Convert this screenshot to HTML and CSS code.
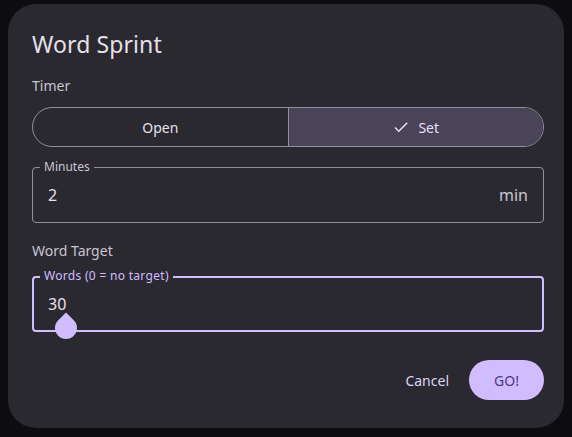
FILE: index.html
```html
<!DOCTYPE html>
<html>
<head>
<meta charset="utf-8">
<link rel="stylesheet" href="styles.css">
</head>
<body>
<div class="dialog">
  <h1 class="title">Word Sprint</h1>
  <div class="section-label">Timer</div>
  <div class="segmented">
    <div class="seg">Open</div>
    <div class="seg seg-on">
      <svg class="check" width="18" height="18" viewBox="0 0 24 24"><path d="M9 16.17L4.83 12l-1.42 1.41L9 19 21 7l-1.41-1.41z" fill="currentColor"/></svg>
      <span>Set</span>
    </div>
  </div>
  <div class="field">
    <span class="field-label">Minutes</span>
    <span class="field-value">2</span>
    <span class="suffix">min</span>
  </div>
  <div class="section-label second">Word Target</div>
  <div class="field field-focus">
    <span class="field-label">Words (0 = no target)</span>
    <span class="field-value">30</span>
    <span class="handle"></span>
  </div>
  <div class="actions">
    <span class="text-btn">Cancel</span>
    <span class="go-btn">GO!</span>
  </div>
</div>
</body>
</html>
```
FILE: styles.css
```css
html, body {
  margin: 0;
  background: #0d0c10;
}
body {
  padding: 4px 8px 9px 8px;
  font-family: "Noto Sans", "DejaVu Sans", sans-serif;
  color: #e6e0e9;
}
.dialog {
  width: 556px;
  height: 424px;
  box-sizing: border-box;
  background: #2b2930;
  border-radius: 28px;
  padding: 24px 20px 0 24px;
  display: flex;
  flex-direction: column;
}
.title {
  margin: 0;
  font-weight: 400;
  font-size: 23px;
  line-height: 32px;
  color: #e6e0e9;
  letter-spacing: 0.1px;
}
.section-label {
  margin-top: 16px;
  font-size: 14px;
  line-height: 20px;
  color: #cac4d0;
}
.section-label.second {
  margin-top: 18px;
}
.segmented {
  margin-top: 11px;
  height: 40px;
  box-sizing: border-box;
  border: 1px solid #938f99;
  border-radius: 20px;
  display: flex;
  overflow: hidden;
}
.seg {
  flex: 1;
  display: flex;
  align-items: center;
  justify-content: center;
  gap: 8px;
  font-size: 14px;
  color: #e6e0e9;
}
.seg-on {
  background: #4a4458;
  border-left: 1px solid #938f99;
  color: #e8def8;
}
.check {
  color: #e8def8;
}
.field {
  position: relative;
  margin-top: 20px;
  height: 56px;
  box-sizing: border-box;
  border: 1px solid #938f99;
  border-radius: 4px;
  display: flex;
  align-items: center;
  padding: 0 15px;
}
.field-label {
  position: absolute;
  top: -9px;
  left: 7px;
  padding: 0 4px;
  background: #2b2930;
  font-size: 12px;
  line-height: 16px;
  color: #cac4d0;
}
.field-value {
  flex: 1;
  font-size: 16px;
  color: #e6e0e9;
}
.suffix {
  font-size: 16px;
  color: #cac4d0;
}
.field-focus {
  margin-top: 15px;
  border: 2px solid #d0bcff;
  padding: 0 14px;
}
.field-focus .field-label {
  top: -10px;
  left: 6px;
  color: #d0bcff;
  letter-spacing: 0.3px;
}
.handle {
  position: absolute;
  left: 21px;
  top: 39px;
  width: 22px;
  height: 22px;
  background: #d0bcff;
  border-radius: 0 50% 50% 50%;
  transform: rotate(45deg);
}
.actions {
  margin-top: 28px;
  display: flex;
  justify-content: flex-end;
  align-items: center;
  gap: 8px;
}
.text-btn {
  padding: 0 12px;
  height: 40px;
  display: flex;
  align-items: center;
  font-size: 14px;
  color: #ddd3f5;
}
.go-btn {
  width: 75px;
  height: 40px;
  border-radius: 20px;
  background: #d0bcff;
  color: #4a3a85;
  display: flex;
  align-items: center;
  justify-content: center;
  font-size: 14px;
}
```
